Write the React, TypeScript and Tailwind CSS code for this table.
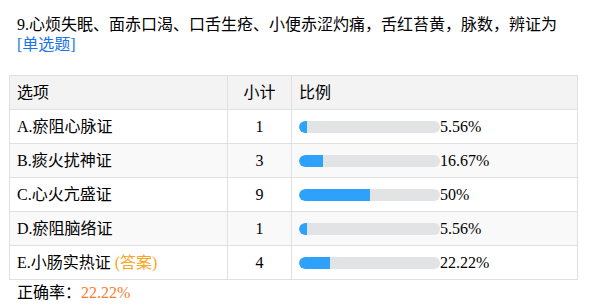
const rows = [
  { label: "A.瘀阻心脉证", count: 1, pct: 5.56, text: "5.56%" },
  { label: "B.痰火扰神证", count: 3, pct: 16.67, text: "16.67%" },
  { label: "C.心火亢盛证", count: 9, pct: 50, text: "50%" },
  { label: "D.瘀阻脑络证", count: 1, pct: 5.56, text: "5.56%" },
  { label: "E.小肠实热证", count: 4, pct: 22.22, text: "22.22%", answer: true },
];

export default function App() {
  return (
    <div className="w-[590px] h-[305px] bg-white px-[9px] pt-[15px] text-[16px] leading-[20px] text-black font-[Liberation_Serif,Noto_Sans_CJK_SC,serif] overflow-hidden">
      <div className="pl-2 pr-4">
        9.心烦失眠、面赤口渴、口舌生疮、小便赤涩灼痛，舌红苔黄，脉数，辨证为{" "}
        <span className="text-[#1a73e8]">[单选题]</span>
      </div>
      <table className="mt-[20px] w-[569px] border-collapse table-fixed">
        <colgroup>
          <col className="w-[218px]" />
          <col className="w-[64px]" />
          <col />
        </colgroup>
        <thead>
          <tr className="h-[34px] bg-[#f3f3f3]">
            <th className="border border-[#e0e0e0] pl-[7px] text-left font-normal">选项</th>
            <th className="border border-[#e0e0e0] px-2 text-center font-normal">小计</th>
            <th className="border border-[#e0e0e0] pl-[7px] text-left font-normal">比例</th>
          </tr>
        </thead>
        <tbody>
          {rows.map((r, i) => (
            <tr key={r.label} className={`h-[34px] ${i % 2 === 1 ? "bg-[#f9f9f9]" : "bg-white"}`}>
              <td className="border border-[#e0e0e0] pl-[7px]">
                {r.label}
                {r.answer && <span className="text-[#f5a623]"> (答案)</span>}
              </td>
              <td className="border border-[#e0e0e0] px-2 text-center">{r.count}</td>
              <td className="border border-[#e0e0e0] pl-[7px]">
                <div className="flex items-center">
                  <div className="w-[141px] h-[12px] rounded-full bg-[#e2e3e5] overflow-hidden">
                    <div
                      className="h-full rounded-l-full bg-[#2ea2fa]"
                      style={{ width: `${r.pct}%` }}
                    />
                  </div>
                  <span>{r.text}</span>
                </div>
              </td>
            </tr>
          ))}
        </tbody>
      </table>
      <div className="pl-2 mt-[3px]">
        正确率：<span className="text-[#fa7d2e]">22.22%</span>
      </div>
    </div>
  );
}
